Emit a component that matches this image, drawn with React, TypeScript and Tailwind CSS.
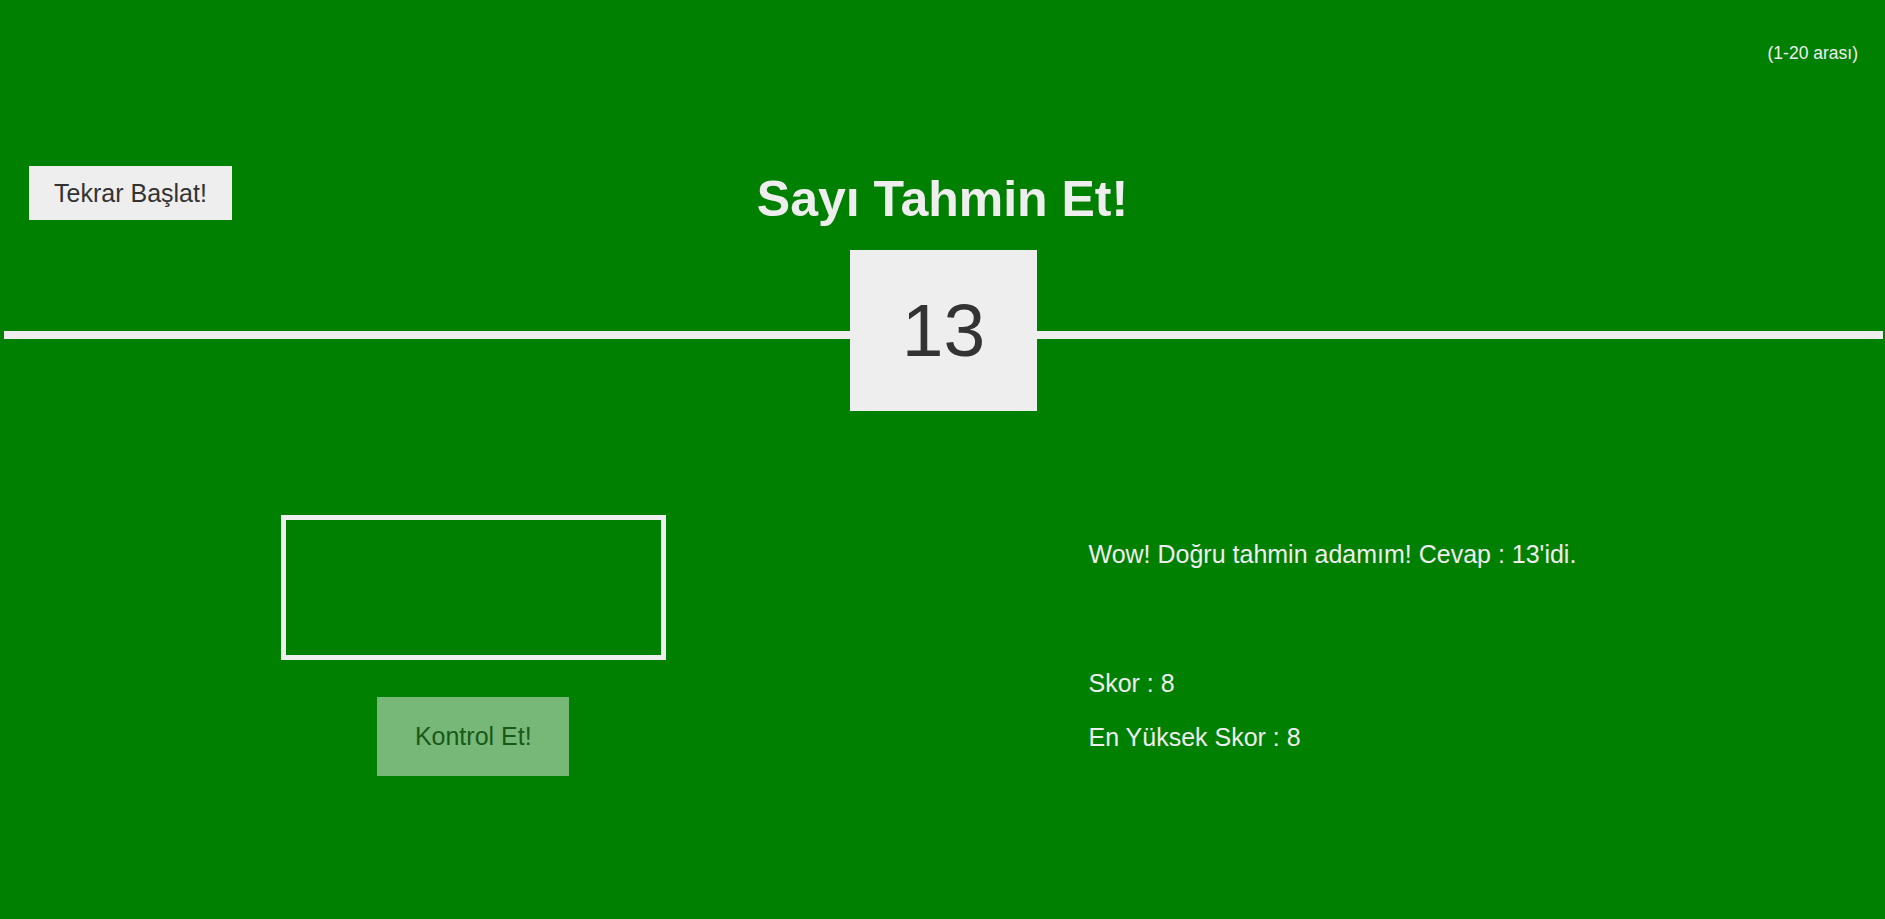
import React from "react";

export default function App() {
  return (
    <div
      className="w-full h-[919px] bg-[#008000] text-[#eeeeee] overflow-hidden"
      style={{ fontFamily: '"Liberation Sans", Arial, sans-serif' }}
    >
      {/* top bar */}
      <div className="h-[166px] flex justify-end items-start pt-[43px] pr-[27px]">
        <span className="text-[17.5px] leading-[20px]">(1-20 arası)</span>
      </div>

      {/* header row */}
      <div className="h-[84px] grid grid-cols-[1fr_auto_1fr] items-start">
        <div className="pl-[29px]">
          <button className="w-[203px] h-[54px] bg-[#eeeeee] text-[#333333] text-[25px] leading-[29px] flex items-center justify-center">
            Tekrar Başlat!
          </button>
        </div>
        <h1 className="mt-[4px] text-[50px] leading-[58px] font-bold text-[#eeeeee]">
          Sayı Tahmin Et!
        </h1>
        <div />
      </div>

      {/* number row */}
      <div className="flex items-start h-[161px]">
        <div className="flex-1 ml-[4px] mt-[81px] h-[8px] bg-[#eeeeee]" />
        <div className="w-[187px] h-[161px] bg-[#eeeeee] text-[#333333] text-[75px] leading-none flex items-center justify-center">
          13
        </div>
        <div className="flex-1 mr-[2px] mt-[81px] h-[8px] bg-[#eeeeee]" />
      </div>

      {/* bottom */}
      <div className="grid grid-cols-2">
        <div className="pl-[4px] pt-[104px] flex flex-col items-center">
          <input
            type="number"
            className="w-[385px] h-[145px] border-[5px] border-[#eeeeee] bg-transparent outline-none text-[#eeeeee] text-[80px] text-center"
          />
          <button
            disabled
            className="mt-[37px] w-[192px] h-[79px] bg-[#eeeeee] opacity-50 text-[#333333] text-[25px] leading-[29px] flex items-center justify-center"
          >
            Kontrol Et!
          </button>
        </div>
        <div className="pt-[129px] pl-[146px] text-[25px] leading-[29px]">
          <p>Wow! Doğru tahmin adamım! Cevap : 13'idi.</p>
          <p className="mt-[100px]">Skor : 8</p>
          <p className="mt-[25px]">En Yüksek Skor : 8</p>
        </div>
      </div>
    </div>
  );
}
